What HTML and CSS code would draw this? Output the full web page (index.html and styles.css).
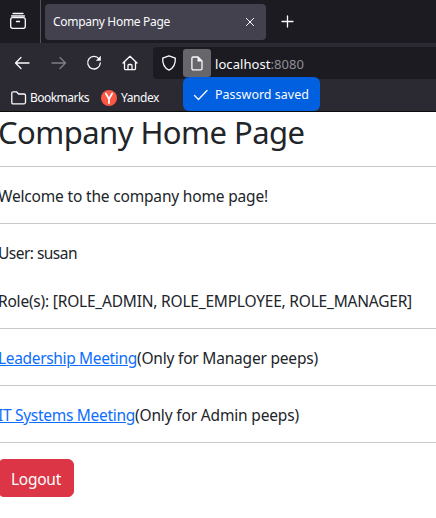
FILE: index.html
```html
<!DOCTYPE html>
<html lang="en">
<head>
<meta charset="utf-8">
<title>Company Home Page</title>
<link rel="stylesheet" href="styles.css">
</head>
<body>
<div class="browser">
  <div class="tabs">
    <div class="view"><svg width="18" height="18" viewBox="0 0 18 18"><path d="M4 1.500h10M2.500 4h13"/><rect x="1.700" y="5.700" width="14.600" height="10.600" rx="2"/><path d="M7.500 9.500h3"/></svg></div>
    <div class="tab"><span class="t-tab">Company Home Page</span><svg width="8" height="8" viewBox="0 0 8 8"><path d="M.4.4l7.200 7.200M7.600.4L.4 7.600"/></svg></div>
    <svg class="plus" width="13" height="13" viewBox="0 0 13 13"><path d="M6.500 1v11M1 6.500h11"/></svg>
  </div>
  <div class="nav">
    <svg class="back" width="16" height="14" viewBox="0 0 16 14"><path d="M15 7H1.500M7 1.500L1.500 7 7 12.500"/></svg>
    <svg class="forward" width="16" height="14" viewBox="0 0 16 14"><path d="M1 7h13.500M9 1.500L14.500 7 9 12.500"/></svg>
    <svg class="reload" width="16" height="16" viewBox="0 0 16 16"><path d="M13 3.800A6.300 6.300 0 1 0 14.300 8"/><path class="solid" d="M14.800.8v5H9.800z"/></svg>
    <svg class="home" width="16" height="16" viewBox="0 0 16 16"><path d="M1 8l7-6.800L15 8M2.500 7v6.500a1.200 1.200 0 0 0 1.200 1.200h8.600a1.200 1.200 0 0 0 1.200-1.200V7M6 14.500v-4a1 1 0 0 1 1-1h2a1 1 0 0 1 1 1v4"/></svg>
    <div class="url">
      <svg width="16" height="16" viewBox="0 0 16 16"><path d="M8 .8l6.300 2.400c.3 5.200-1.500 9.600-6.300 12C3.200 12.800 1.400 8.400 1.700 3.200z"/></svg>
      <div class="ident"><svg width="14" height="15" viewBox="0 0 14 15"><path d="M3.200 1h4.800l4 4v7.500a1.300 1.300 0 0 1-1.300 1.300H3.200a1.300 1.300 0 0 1-1.300-1.300V2.300A1.300 1.300 0 0 1 3.200 1z"/><path class="solid" d="M7.500 1v4.500H12z"/></svg></div>
      <span class="t-url">localhost<span class="port">:8080</span></span>
    </div>
    <div class="saved"><svg width="16" height="12" viewBox="0 0 16 12"><path d="M1.500 6.500l4 4L14 1.500"/></svg><span class="t-saved">Password saved</span></div>
  </div>
  <div class="marks">
    <svg width="16" height="14" viewBox="0 0 16 14"><path d="M.8 2A1.200 1.200 0 0 1 2 .8h3.500L7.500 3H13a1.500 1.500 0 0 1 1.500 1.500v6.800a1.500 1.500 0 0 1-1.500 1.500H2A1.200 1.200 0 0 1 .8 11.600z"/></svg>
    <span class="t-bookmarks">Bookmarks</span>
    <svg class="ya" width="16" height="16" viewBox="0 0 16 16"><circle cx="8" cy="8" r="8"/><path d="M4.800 3.500L8 9l3.200-5.500M8 8.500V13"/></svg>
    <span class="t-yandex">Yandex</span>
  </div>
</div>
<main>
  <h2>Company Home Page</h2>
  <hr>
  <p class="welcome">Welcome to the company home page!</p>
  <hr>
  <p class="user">User: susan</p>
  <p class="roles">Role(s): [ROLE_ADMIN, ROLE_EMPLOYEE, ROLE_MANAGER]</p>
  <hr>
  <p class="leaders"><a href="#">Leadership Meeting</a><span>(Only for Manager peeps)</span></p>
  <hr>
  <p class="systems"><a href="#">IT Systems Meeting</a><span>(Only for Admin peeps)</span></p>
  <hr>
  <button type="button">Logout</button>
</main>
</body>
</html>
```
FILE: styles.css
```css
* { box-sizing: border-box; }
body { margin: 0; background: #fff; color: #212529; font: 15.5px/22px "Noto Sans", "Open Sans", sans-serif; overflow: hidden; }
svg { display: block; flex: none; fill: none; stroke: #fbfbfe; stroke-width: 1.3; stroke-linecap: round; stroke-linejoin: round; }
svg .solid { fill: #fbfbfe; stroke: none; }
span, a, p, h2 { white-space: nowrap; }
.browser { height: 112px; background: #2b2a33; border-bottom: 1px solid #0c0c0d; color: #fbfbfe; font-size: 12px; line-height: 16px; }
.tabs { display: flex; align-items: center; height: 43px; background: #1c1b22; }
.view { width: 41px; height: 43px; padding: 12px 0 0 9px; border-right: 1px solid #55545c; }
.tab { display: flex; align-items: center; justify-content: space-between; width: 221px; height: 36px; margin-left: 4px; padding: 0 12px 0 8px; border-radius: 4px; background: #42414d; }
.tab svg { stroke-width: 1; }
.t-tab { letter-spacing: -.308px; }
.plus { margin-left: 15px; }
.nav { position: relative; display: flex; align-items: center; height: 40px; padding-left: 14px; }
.forward { margin-left: 21px; opacity: .4; }
.reload { margin-left: 19px; }
.home { margin-left: 20px; }
.url { display: flex; align-items: center; flex: 1; height: 32px; margin-left: 15px; padding-left: 8px; background: #1c1b22; border-radius: 4px 0 0 4px; font-size: 13px; }
.ident { display: flex; align-items: center; justify-content: center; width: 28px; height: 28px; margin: 0 4px 0 6px; border-radius: 3px; background: #66666b; }
.t-url { padding-top: 1px; letter-spacing: .06px; }
.port { color: #8f8f96; }
.saved { position: absolute; left: 183px; top: 34px; display: flex; align-items: center; width: 137px; height: 34px; padding: 1px 0 0 10px; gap: 6px; border-radius: 6px; background: #0060df; font-size: 12.5px; }
.marks { display: flex; align-items: center; height: 28px; padding: 1px 0 0 11px; }
.t-bookmarks { margin: 1px 12px 0 3px; letter-spacing: -.533px; }
.t-yandex { margin-top: 1px; letter-spacing: -.435px; }
.ya { margin-right: 4px; stroke-width: 1.8; }
.ya circle { fill: #fc5644; stroke: none; }
main { margin-left: -2px; }
h2 { margin: 0; padding-top: 3px; font-size: 31px; font-weight: 400; line-height: 35.4px; letter-spacing: -.55px; }
hr { margin: 16px 0; border: 0; border-top: 1px solid #c8c9ca; }
p { margin: 0; padding-top: 2px; }
.welcome { letter-spacing: -.177px; }
.user { letter-spacing: -.527px; }
.roles { margin-top: 24px; letter-spacing: -.207px; }
a { color: #0d6efd; text-decoration: underline; }
.leaders a { letter-spacing: -.34px; }
.leaders span { letter-spacing: -.2px; }
.systems a { letter-spacing: -.293px; }
.systems span { letter-spacing: -.164px; }
button { display: block; width: 76px; height: 38px; padding: 7px 12px 5px; border: 1px solid #dc3545; border-radius: 6px; background: #dc3545; color: #fff; font: inherit; letter-spacing: -.266px; }
```
